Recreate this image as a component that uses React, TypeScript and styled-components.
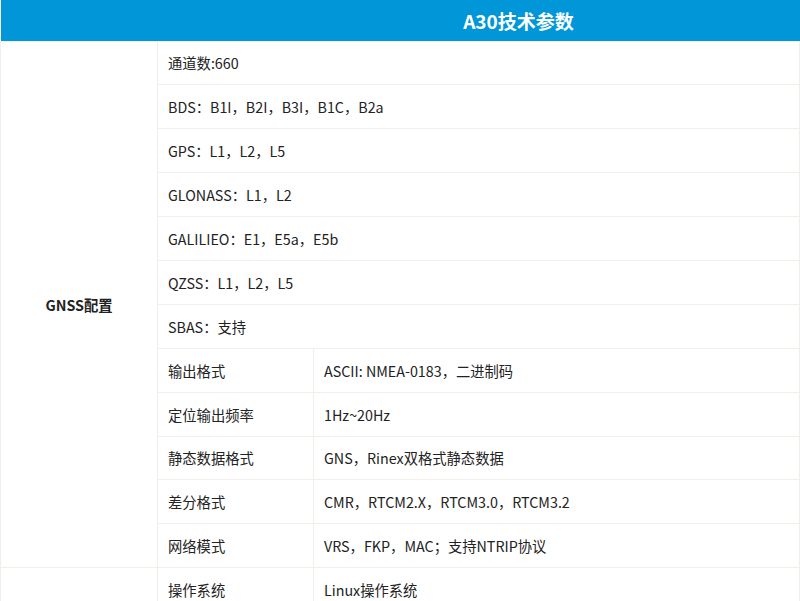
import React from "react";
import styled, { createGlobalStyle } from "styled-components";

const Global = createGlobalStyle`
  body { margin: 0; background: #fff; font-family: "Noto Sans CJK SC", "Noto Sans", sans-serif; color: #222; }
`;

const Table = styled.table`
  width: 800px;
  border-collapse: collapse;
  table-layout: fixed;
  font-size: 14.3px;
`;

const HeadRow = styled.tr`
  background: #0096d8;
  height: 41px;
`;

const HeadCell = styled.th`
  color: #fff;
  font-size: 19px;
  font-weight: 700;
  text-align: center;
  padding: 0 0 0 80px;
`;

const Cell = styled.td<{ $center?: boolean; $bold?: boolean }>`
  border: 1px solid #f0efe8;
  height: 42.9px;
  padding: 0 0 0 10px;
  text-align: ${(p) => (p.$center ? "center" : "left")};
  font-weight: ${(p) => (p.$bold ? 700 : 400)};
  vertical-align: middle;
  white-space: nowrap;
`;

const single = [
  "通道数:660",
  "BDS：B1I，B2I，B3I，B1C，B2a",
  "GPS：L1，L2，L5",
  "GLONASS：L1，L2",
  "GALILIEO：E1，E5a，E5b",
  "QZSS：L1，L2，L5",
  "SBAS：支持",
];
const pairs = [
  ["输出格式", "ASCII: NMEA-0183，二进制码"],
  ["定位输出频率", "1Hz~20Hz"],
  ["静态数据格式", "GNS，Rinex双格式静态数据"],
  ["差分格式", "CMR，RTCM2.X，RTCM3.0，RTCM3.2"],
  ["网络模式", "VRS，FKP，MAC；支持NTRIP协议"],
];

export default function App() {
  return (
    <>
      <Global />
      <Table>
        <colgroup>
          <col style={{ width: 157 }} />
          <col style={{ width: 156 }} />
          <col />
        </colgroup>
        <thead>
          <HeadRow>
            <HeadCell />
            <HeadCell colSpan={2}>A30技术参数</HeadCell>
          </HeadRow>
        </thead>
        <tbody>
          {single.map((t, i) => (
            <tr key={t}>
              {i === 0 && (
                <Cell rowSpan={12} $center $bold style={{ paddingLeft: 0 }}>
                  GNSS配置
                </Cell>
              )}
              <Cell colSpan={2}>{t}</Cell>
            </tr>
          ))}
          {pairs.map(([a, b]) => (
            <tr key={a}>
              <Cell>{a}</Cell>
              <Cell>{b}</Cell>
            </tr>
          ))}
          <tr>
            <Cell />
            <Cell>操作系统</Cell>
            <Cell>Linux操作系统</Cell>
          </tr>
        </tbody>
      </Table>
    </>
  );
}
